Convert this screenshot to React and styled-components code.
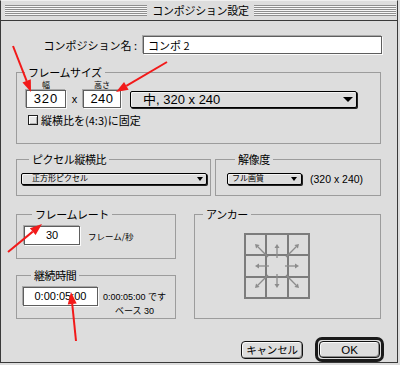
import React from 'react';
import styled, { createGlobalStyle } from 'styled-components';

const JP = `"Noto Sans CJK JP", sans-serif`;
const NUM = `"Liberation Sans", "Noto Sans CJK JP", sans-serif`;

const GlobalStyle = createGlobalStyle`
  html, body { margin: 0; padding: 0; background: #dddddd; }
  body { font-family: ${JP}; color: #000; }
  * { box-sizing: border-box; }
`;

const Page = styled.div`
  position: relative;
  width: 400px;
  height: 365px;
  background: #dddddd;
  overflow: hidden;
`;

const Window = styled.div`
  width: 398px;
  height: 363px;
  border: 1px solid #3a3a3a;
  border-top-color: #efefef;
  background: #dddddd;
  display: flex;
  flex-direction: column;
`;

const TitleBar = styled.div`
  flex: none;
  height: 20px;
  border-bottom: 1px solid #3a3a3a;
  display: flex;
  align-items: center;
  padding: 0 1px 0 4px;
`;

const Stripes = styled.div`
  flex: 1;
  height: 11px;
  background: repeating-linear-gradient(to bottom, #8e8e8e 0 1px, #f6f6f6 1px 2px);
`;

const Title = styled.div`
  font-size: 11px;
  line-height: 19px;
  letter-spacing: -0.3px;
  padding: 0 5px;
  white-space: nowrap;
`;

const Content = styled.div`
  flex: 1;
  display: flex;
  flex-direction: column;
  padding: 0 16px 0 15px;
`;

const NameRow = styled.div`
  margin-top: 15px;
  margin-right: -1px;
  display: flex;
  align-items: center;
  justify-content: flex-end;
  gap: 6px;
`;

const Label = styled.span`
  font-family: ${(p) => (p.$num ? NUM : JP)};
  font-size: ${(p) => p.$size || 11}px;
  letter-spacing: ${(p) => p.$ls || 0}px;
  white-space: nowrap;
`;

const Field = styled.div`
  flex: none;
  width: ${(p) => p.$w}px;
  height: ${(p) => p.$h}px;
  background: #fff;
  border: 1px solid #5e5e5e;
  box-shadow: -1px -1px 0 #a8a8a8, 1px 1px 0 #fbfbfb;
  font-family: ${(p) => (p.$num ? NUM : JP)};
  font-size: ${(p) => p.$size || 11}px;
  letter-spacing: ${(p) => p.$ls || 0}px;
  line-height: ${(p) => p.$h - 2}px;
  text-align: ${(p) => p.$align || 'center'};
  padding-left: ${(p) => p.$pl || 0}px;
  white-space: nowrap;
`;

const Group = styled.fieldset`
  margin: 0;
  padding: ${(p) => p.$pad || '0'};
  min-width: 0;
  border: 1px solid #9c9c9c;
  width: ${(p) => (p.$w ? `${p.$w}px` : 'auto')};
  flex: ${(p) => (p.$w ? 'none' : '1')};
  margin-top: ${(p) => p.$mt || 0}px;
`;

const Legend = styled.legend`
  font-family: ${JP};
  font-size: 11px;
  line-height: 14px;
  letter-spacing: -0.4px;
  padding: 0 3px;
  margin-left: 8px;
`;

const SizeRow = styled.div`
  display: flex;
  align-items: flex-end;
  padding-left: 9px;
`;

const SizeCol = styled.div`
  display: flex;
  flex-direction: column;
  align-items: center;
`;

const TinyLabel = styled.div`
  font-size: 8px;
  line-height: 11px;
  height: 11px;
`;

const Times = styled.div`
  width: 17px;
  height: 18px;
  line-height: 19px;
  text-align: center;
  font-family: ${NUM};
  font-size: 11px;
`;

const Popup = styled.div`
  flex: none;
  display: flex;
  align-items: center;
  justify-content: space-between;
  width: ${(p) => (p.$w ? `${p.$w}px` : 'auto')};
  height: ${(p) => p.$h}px;
  margin-left: ${(p) => p.$ml || 0}px;
  padding: 0 ${(p) => p.$pr || 3}px 0 ${(p) => p.$pl || 4}px;
  border: 1px solid #000;
  border-radius: 2px;
  background: #dddddd;
  box-shadow: inset 1px 1px 0 #f4f4f4, 1px 1px 0 #222;
  font-family: ${NUM};
  font-size: ${(p) => p.$size}px;
  white-space: nowrap;
`;

const PopText = styled.span`
  line-height: 1;
  letter-spacing: ${(p) => p.$ls || 0}px;
`;

const Tri = styled.span`
  flex: none;
  width: 0;
  height: 0;
  border-left: ${(p) => p.$s}px solid transparent;
  border-right: ${(p) => p.$s}px solid transparent;
  border-top: ${(p) => Math.round(p.$s * 1.0)}px solid #000;
`;

const CheckRow = styled.div`
  margin-top: 5px;
  padding-left: 11px;
  height: 14px;
  display: flex;
  align-items: center;
  gap: 3px;
`;

const CheckBox = styled.span`
  width: 10px;
  height: 10px;
  border: 1px solid #1e1e1e;
  background: #e8e8e8;
  box-shadow: inset 1px 1px 0 #fff, inset -1px -1px 0 #b0b0b0;
`;

const MidRow = styled.div`
  margin-top: 8px;
  display: flex;
  gap: 4px;
`;

const ResLine = styled.div`
  display: flex;
  align-items: center;
  gap: 8px;
`;

const BottomRow = styled.div`
  margin-top: 11px;
  display: flex;
  gap: 18px;
`;

const LeftCol = styled.div`
  width: 160px;
  display: flex;
  flex-direction: column;
  gap: 9px;
`;

const InlineRow = styled.div`
  display: flex;
  align-items: ${(p) => p.$align || 'center'};
  gap: ${(p) => p.$gap || 0}px;
`;

const InfoCol = styled.div`
  margin-top: 3px;
  display: flex;
  flex-direction: column;
  align-items: center;
  font-size: 9px;
  line-height: 14px;
  white-space: nowrap;
  font-family: ${NUM};
`;

const AnchorBox = styled.div`
  margin: 12px 0 0 49px;
  width: 66px;
  height: 66px;
`;

const ButtonRow = styled.div`
  margin-top: 18px;
  margin-right: -3px;
  display: flex;
  justify-content: flex-end;
  align-items: center;
  gap: 12px;
`;

const Button = styled.div`
  width: ${(p) => p.$w}px;
  height: ${(p) => p.$h}px;
  border: 1px solid #111;
  border-radius: 4px;
  background: #dddddd;
  box-shadow: inset 1px 1px 0 #fafafa, inset -1px -1px 0 #8a8a8a;
  display: flex;
  align-items: center;
  justify-content: center;
  font-family: ${(p) => (p.$num ? NUM : JP)};
  font-size: ${(p) => p.$size}px;
  letter-spacing: ${(p) => p.$ls || 0}px;
`;

const DefaultRing = styled.div`
  border: 3px solid #1a1a1a;
  border-radius: 7px;
  padding: 1px;
  background: #dddddd;
`;

const Overlay = styled.svg`
  position: absolute;
  left: 0;
  top: 0;
  pointer-events: none;
`;

function head(x1, y1, x2, y2, len, half) {
  const dx = x2 - x1;
  const dy = y2 - y1;
  const d = Math.hypot(dx, dy);
  const ux = dx / d;
  const uy = dy / d;
  const bx = x2 - ux * len;
  const by = y2 - uy * len;
  return {
    base: [bx, by],
    pts: `${x2},${y2} ${bx - uy * half},${by + ux * half} ${bx + uy * half},${by - ux * half}`,
  };
}

function Arrow({ x1, y1, x2, y2, len, half, color, sw }) {
  const h = head(x1, y1, x2, y2, len, half);
  return (
    <g>
      <line x1={x1} y1={y1} x2={h.base[0]} y2={h.base[1]} stroke={color} strokeWidth={sw} />
      <polygon points={h.pts} fill={color} />
    </g>
  );
}

function AnchorGrid() {
  const g = '#7c7c7c';
  const a = '#8c8c8c';
  const lines = [1, 22, 44, 65];
  const arrows = [
    [33, 25, 33, 11],
    [33, 41, 33, 55],
    [25, 33, 11, 33],
    [41, 33, 55, 33],
    [24, 24, 11, 11],
    [42, 24, 55, 11],
    [24, 42, 11, 55],
    [42, 42, 55, 55],
  ];
  return (
    <svg width="66" height="66" viewBox="0 0 66 66">
      {lines.map((v) => (
        <g key={v}>
          <line x1={v} y1="0" x2={v} y2="66" stroke={g} strokeWidth="2" />
          <line x1="0" y1={v} x2="66" y2={v} stroke={g} strokeWidth="2" />
        </g>
      ))}
      {arrows.map((r, i) => (
        <Arrow key={i} x1={r[0]} y1={r[1]} x2={r[2]} y2={r[3]} len={4} half={2.5} color={a} sw={1.3} />
      ))}
    </svg>
  );
}

export default function App() {
  const red = '#f21a1a';
  return (
    <Page>
      <GlobalStyle />
      <Window>
        <TitleBar>
          <Stripes />
          <Title>コンポジション設定</Title>
          <Stripes />
        </TitleBar>
        <Content>
          <NameRow>
            <Label>コンポジション名 :</Label>
            <Field $w={239} $h={18} $align="left" $pl={4}>コンポ 2</Field>
          </NameRow>

          <Group $mt={11} $pad="0 0 4px 0">
            <Legend>フレームサイズ</Legend>
            <SizeRow>
              <SizeCol>
                <TinyLabel>幅</TinyLabel>
                <Field $w={40} $h={18} $num $size={13} $ls={1}>320</Field>
              </SizeCol>
              <Times>x</Times>
              <SizeCol>
                <TinyLabel>高さ</TinyLabel>
                <Field $w={38} $h={18} $num $size={13} $ls={0.5}>240</Field>
              </SizeCol>
              <Popup $w={227} $h={17} $ml={9} $pl={12} $pr={3} $size={13}>
                <PopText>中, 320 x 240</PopText>
                <Tri $s={5} />
              </Popup>
            </SizeRow>
            <CheckRow>
              <CheckBox />
              <Label>縦横比を(4:3)に固定</Label>
            </CheckRow>
          </Group>

          <MidRow>
            <Group $w={195} $pad="7px 3px 10px 4px">
              <Legend>ピクセル縦横比</Legend>
              <Popup $h={12} $pl={10} $pr={3} $size={8}>
                <PopText>正方形ピクセル</PopText>
                <Tri $s={3.5} />
              </Popup>
            </Group>
            <Group $pad="7px 0 10px 11px">
              <Legend>解像度</Legend>
              <ResLine>
                <Popup $w={75} $h={12} $pl={4} $pr={4} $size={8}>
                  <PopText>フル画質</PopText>
                  <Tri $s={3.5} />
                </Popup>
                <Label $num $size={10.5}>(320 x 240)</Label>
              </ResLine>
            </Group>
          </MidRow>

          <BottomRow>
            <LeftCol>
              <Group $pad="5px 0 13px 7px">
                <Legend>フレームレート</Legend>
                <InlineRow $gap={8}>
                  <Field $w={56} $h={19} $num $size={11}>30</Field>
                  <Label $size={8.5}>フレーム/秒</Label>
                </InlineRow>
              </Group>
              <Group $pad="5px 0 0 6px">
                <Legend>継続時間</Legend>
                <InlineRow $align="flex-start" $gap={5}>
                  <Field $w={75} $h={19} $num $size={11}>0:00:05:00</Field>
                  <InfoCol>
                    <span>0:00:05:00 です</span>
                    <span>ベース 30</span>
                  </InfoCol>
                </InlineRow>
              </Group>
            </LeftCol>
            <Group>
              <Legend>アンカー</Legend>
              <AnchorBox>
                <AnchorGrid />
              </AnchorBox>
            </Group>
          </BottomRow>

          <ButtonRow>
            <Button $w={62} $h={18} $size={10.5} $ls={-0.2}>キャンセル</Button>
            <DefaultRing>
              <Button $w={61} $h={17} $num $size={11.5}>OK</Button>
            </DefaultRing>
          </ButtonRow>
        </Content>
      </Window>
      <Overlay width="400" height="365" viewBox="0 0 400 365">
        <Arrow x1={13} y1={46} x2={31} y2={92} len={12} half={4.5} color={red} sw={2} />
        <Arrow x1={167} y1={62} x2={116} y2={92} len={12} half={4.5} color={red} sw={2} />
        <Arrow x1={8} y1={252} x2={42} y2={224} len={12} half={4.5} color={red} sw={2} />
        <Arrow x1={76} y1={341} x2={71} y2={292} len={12} half={4.5} color={red} sw={2} />
      </Overlay>
    </Page>
  );
}
